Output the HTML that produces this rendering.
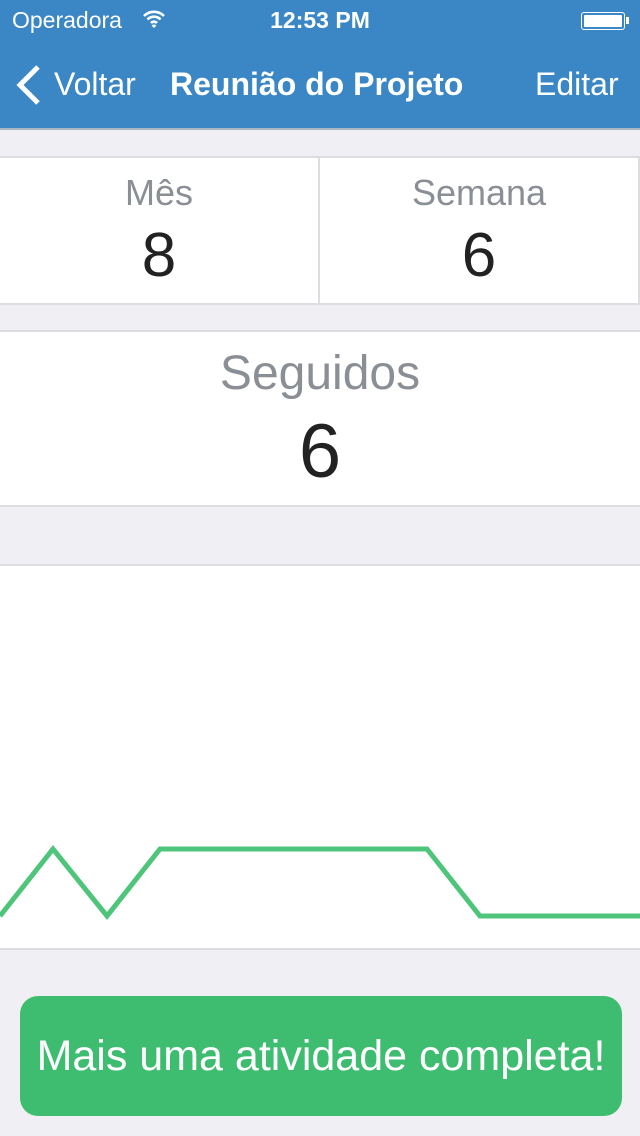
<!DOCTYPE html><html><head><meta charset="utf-8"><style>
body{margin:0;width:640px;height:1136px;background:#efeff4;font-family:"Liberation Sans",sans-serif;position:relative;overflow:hidden}
.nav{position:absolute;left:0;top:0;width:640px;height:128px;background:#3b87c6;border-bottom:2px solid #a9b6c4;color:#fff}
.abs{position:absolute}
.box{position:absolute;background:#fff;border-top:2px solid #dcdde0;border-bottom:2px solid #dcdde0}
.lab{position:absolute;width:100%;text-align:center;color:#8a8e95;font-weight:300}
.num{position:absolute;width:100%;text-align:center;color:#222}
</style></head><body>
<div class="nav">
<div class="abs" style="left:12px;top:7px;font-size:23px">Operadora</div>
<svg class="abs" style="left:142px;top:10px" width="24" height="18" viewBox="0 0 24 18"><path d="M2 6a14 14 0 0 1 20 0M5.5 9.5a9 9 0 0 1 13 0M9 13a4 4 0 0 1 6 0" stroke="#fff" stroke-width="2.6" fill="none"/><path d="M12 18l-2.5-2.5a3.5 3.5 0 0 1 5 0z" fill="#fff"/></svg>
<div class="abs" style="left:0;width:640px;top:7px;text-align:center;font-size:23px;font-weight:bold">12:53 PM</div>
<div class="abs" style="left:581px;top:12px;width:42px;height:16px;border:1.5px solid #fff;border-radius:3px"><div style="margin:2px;height:12px;background:#fff;border-radius:1px"></div></div>
<div class="abs" style="left:626px;top:17px;width:3px;height:7px;background:#fff"></div>
<svg class="abs" style="left:14px;top:65px" width="30" height="40"><path d="M24 2L6 20l18 18" stroke="#fff" stroke-width="5" fill="none"/></svg>
<div class="abs" style="left:54px;top:66px;font-size:32px">Voltar</div>
<div class="abs" style="left:170px;top:66px;font-size:32px;font-weight:bold">Reunião do Projeto</div>
<div class="abs" style="left:535px;top:66px;font-size:32px">Editar</div>
</div>
<div class="box" style="left:0;top:156px;width:638px;height:145px;border-right:2px solid #dcdde0">
<div class="abs" style="left:318px;top:0;width:2px;height:145px;background:#dcdde0"></div>
<div class="abs" style="left:0;width:318px;top:0;height:145px"><div class="lab" style="top:14px;font-size:36px">Mês</div><div class="num" style="top:62px;font-size:62px;font-weight:300">8</div></div>
<div class="abs" style="left:320px;width:318px;top:0;height:145px"><div class="lab" style="top:14px;font-size:36px">Semana</div><div class="num" style="top:62px;font-size:62px;font-weight:300">6</div></div>
</div>
<div class="box" style="left:0;top:330px;width:640px;height:173px">
<div class="lab" style="top:14px;font-size:48px">Seguidos</div>
<div class="num" style="top:76px;font-size:76px;font-weight:300">6</div>
</div>
<div class="box" style="left:0;top:564px;width:640px;height:382px">
<svg class="abs" style="left:0;top:0" width="640" height="382"><polyline points="0,350 53,283 107,350 160,283 427,283 480,350 640,350" stroke="#4ec57b" stroke-width="5" fill="none"/></svg>
</div>
<div class="abs" style="left:20px;top:996px;width:602px;height:120px;background:#3ebd71;border-radius:18px;color:#fff;font-size:43px;text-align:center;line-height:120px;white-space:nowrap">Mais uma atividade completa!</div>
</body></html>
